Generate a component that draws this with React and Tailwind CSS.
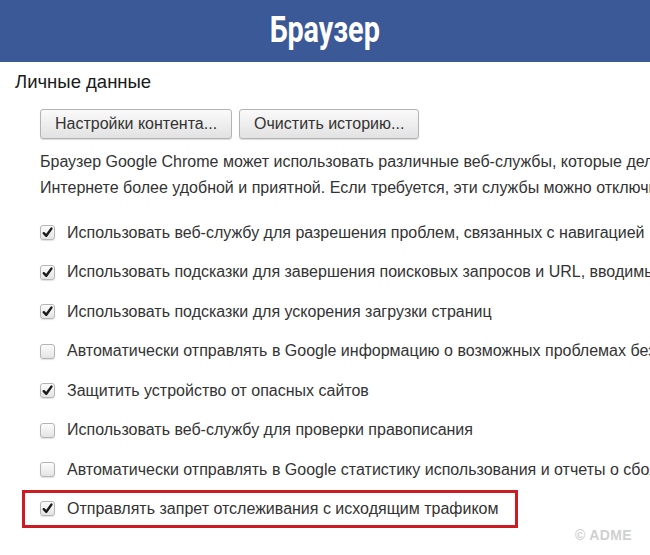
const options = [
  { checked: true, label: "Использовать веб-службу для разрешения проблем, связанных с навигацией" },
  { checked: true, label: "Использовать подсказки для завершения поисковых запросов и URL, вводимых в адресную строку" },
  { checked: true, label: "Использовать подсказки для ускорения загрузки страниц" },
  { checked: false, label: "Автоматически отправлять в Google информацию о возможных проблемах безопасности" },
  { checked: true, label: "Защитить устройство от опасных сайтов" },
  { checked: false, label: "Использовать веб-службу для проверки правописания" },
  { checked: false, label: "Автоматически отправлять в Google статистику использования и отчеты о сбоях" },
];

const Check = ({ checked }) => (
  <span className="flex h-[15px] w-[15px] shrink-0 items-center justify-center rounded-[3px] border border-[#b5b5b5] bg-gradient-to-b from-[#fcfcfc] to-[#e4e4e4] shadow-[0_1px_1px_rgba(0,0,0,0.12)]">
    {checked && (
      <svg width="11" height="11" viewBox="0 0 11 11">
        <path d="M1.8 6.2 L4.3 8.8 L9.4 1.6" fill="none" stroke="#1a1a1a" strokeWidth="2.4" strokeLinecap="round" strokeLinejoin="round" />
      </svg>
    )}
  </span>
);

const Btn = ({ children }) => (
  <button className="h-[30px] rounded-[3px] border border-[#b3b3b3] bg-gradient-to-b from-[#fafafa] to-[#e2e2e2] px-[14px] text-[16px] text-[#333] shadow-[0_1px_1px_rgba(0,0,0,0.15)]">
    {children}
  </button>
);

export default function App() {
  return (
    <div
      className="relative h-[555px] w-[650px] overflow-hidden bg-white text-[#333]"
      style={{ fontFamily: '"Liberation Sans", Arial, sans-serif' }}
    >
      <div className="flex h-[62px] items-center justify-center bg-[#3b5897]">
        <h1
          className="origin-center scale-x-[0.8] pb-[3px] text-[36px] font-bold leading-none text-white"
          style={{ fontFamily: 'Roboto, "Liberation Sans", sans-serif' }}
        >
          Браузер
        </h1>
      </div>

      <div className="pl-[15px] pt-[9px]">
        <h2 className="text-[18.5px] leading-[22px] text-[#1a1a1a]">Личные данные</h2>
        <div className="ml-[25px] mt-[16px] flex gap-[7px]">
          <Btn>Настройки контента...</Btn>
          <Btn>Очистить историю...</Btn>
        </div>
        <div className="ml-[25px] mt-[10px] whitespace-nowrap text-[16px] leading-[26px]">
          <p>Браузер Google Chrome может использовать различные веб-службы, которые делают работу в</p>
          <p>Интернете более удобной и приятной. Если требуется, эти службы можно отключить.</p>
        </div>

        <div className="mt-[12px] flex flex-col">
          {options.map((o, i) => (
            <label key={i} className="ml-[25px] flex h-[39.5px] items-center gap-[12px] whitespace-nowrap text-[16px]">
              <Check checked={o.checked} />
              <span>{o.label}</span>
            </label>
          ))}
          <div className="ml-[7px] flex h-[38px] w-[496px] items-center gap-[12px] border-[3px] border-[#cc1b24] pl-[15px] text-[16px]">
            <Check checked />
            <span>Отправлять запрет отслеживания с исходящим трафиком</span>
          </div>
        </div>
      </div>

      <span className="absolute bottom-[9px] right-[18px] text-[14px] font-bold tracking-wide text-[#d0d0d0]">
        © ADME
      </span>
    </div>
  );
}
